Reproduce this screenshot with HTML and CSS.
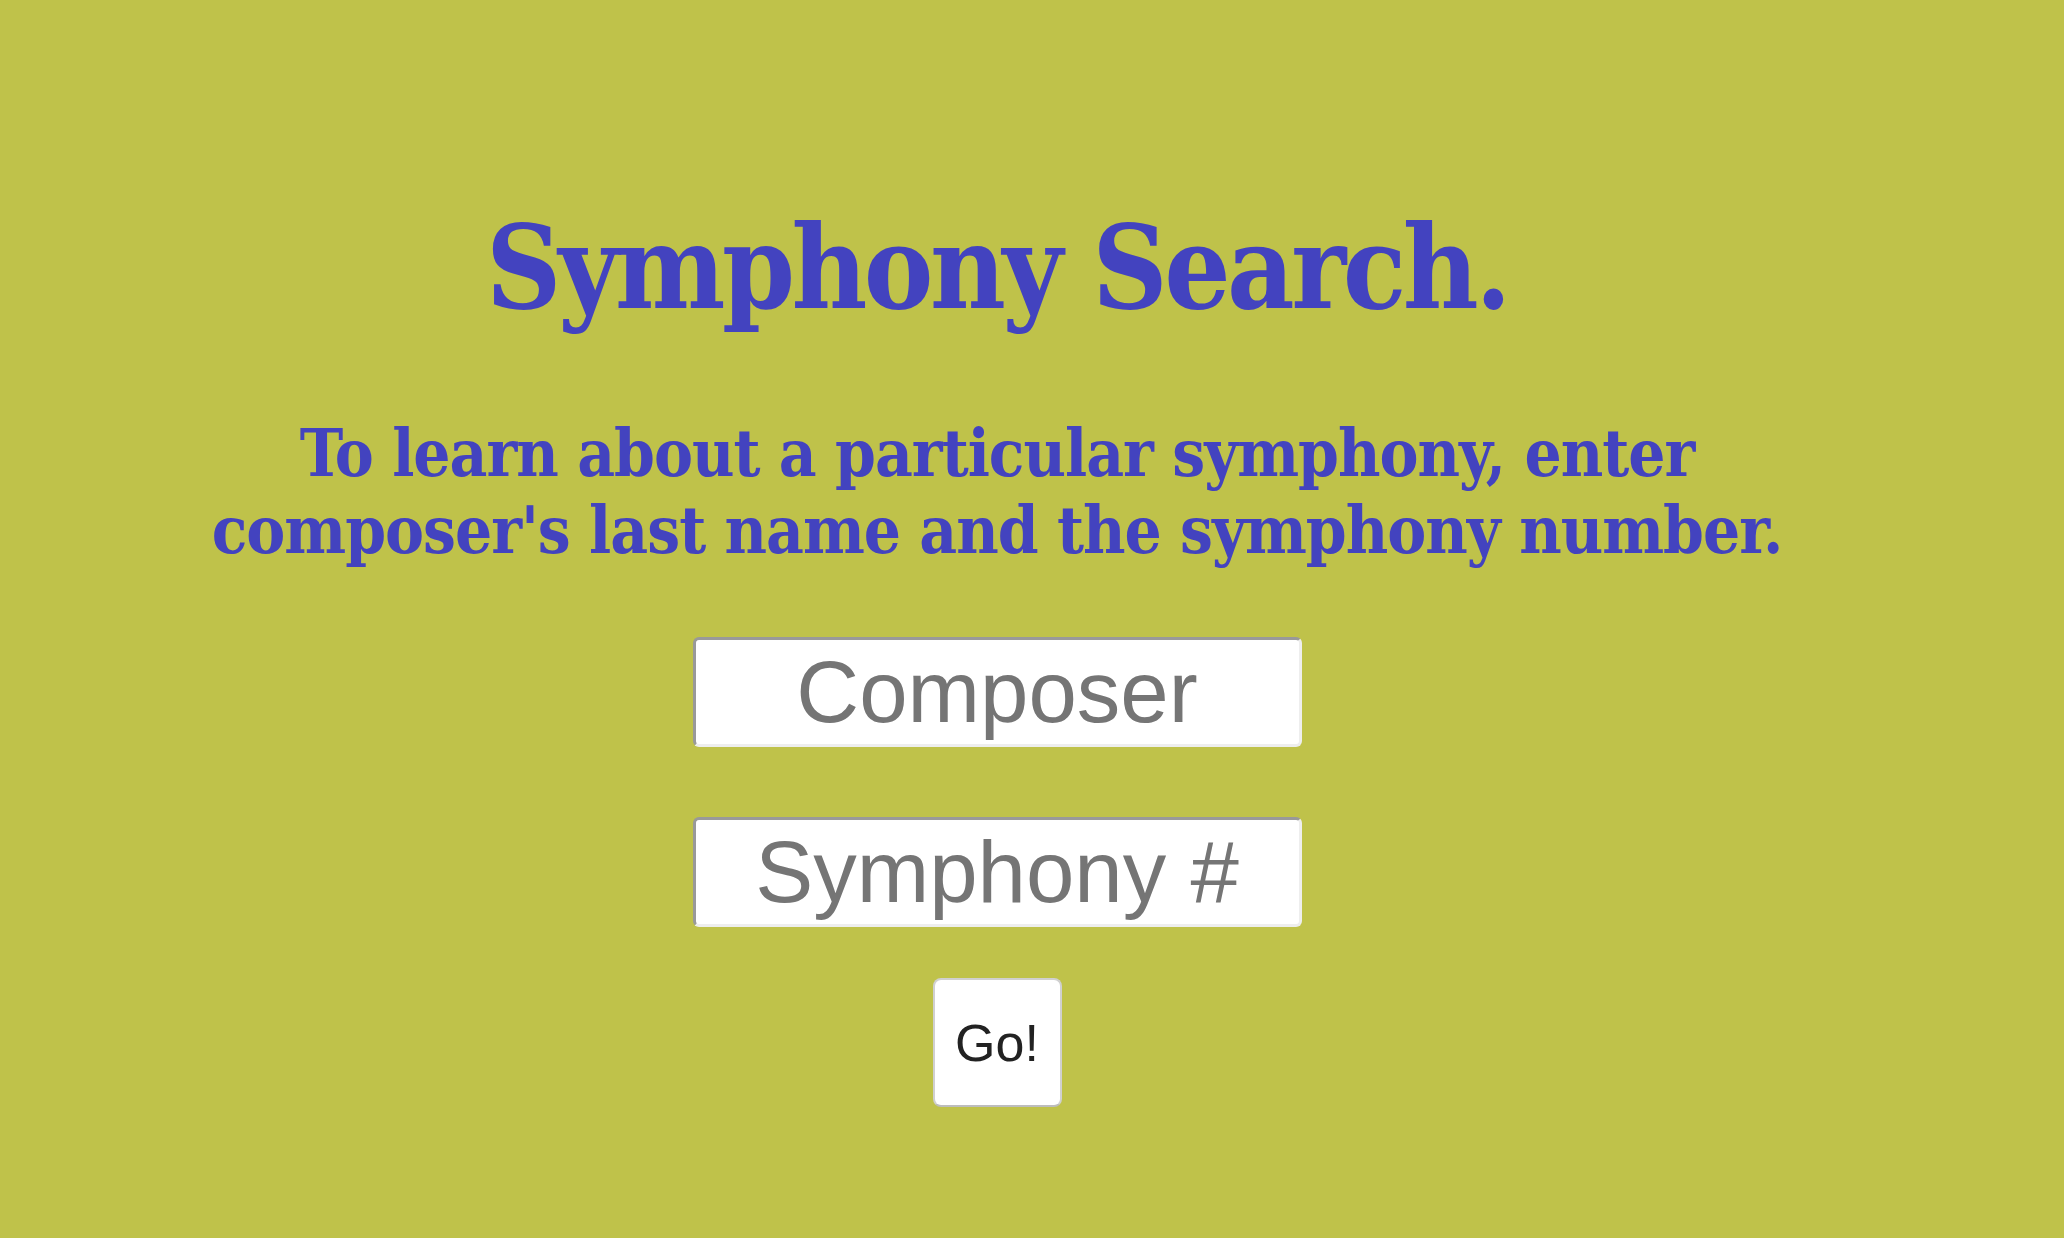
FILE: index.html
```html
<!DOCTYPE html>
<html lang="en">
<head>
<meta charset="utf-8">
<title>Symphony Search</title>
<link rel="stylesheet" href="styles.css">
</head>
<body>
<main class="page">
  <h1 class="title">Symphony Search.</h1>
  <p class="lead">To learn about a particular symphony, enter<br>composer's last name and the symphony number.</p>
  <form class="search">
    <input class="field field-composer" type="text" placeholder="Composer">
    <input class="field field-number" type="text" placeholder="Symphony #">
    <button class="go" type="button">Go!</button>
  </form>
</main>
</body>
</html>
```
FILE: styles.css
```css
html, body {
  margin: 0;
  padding: 0;
  background: #bfc24a;
}
body {
  min-height: 100vh;
}
.page {
  display: flex;
  flex-direction: column;
  align-items: center;
  padding: 209px 70px 0 0;
  color: #4343bf;
  font-family: "DejaVu Serif Condensed", "DejaVu Serif", serif;
}
.title {
  margin: 0;
  font-size: 116px;
  line-height: 116px;
  letter-spacing: -3.5px;
  font-weight: bold;
  text-align: center;
}
.lead {
  margin: 90px 0 0;
  font-size: 65px;
  line-height: 77px;
  letter-spacing: -1px;
  font-weight: bold;
  text-align: center;
}
.search {
  display: flex;
  flex-direction: column;
  align-items: center;
  margin-top: 68px;
}
.field {
  box-sizing: border-box;
  width: 609px;
  height: 110px;
  margin: 0 0 70px;
  padding: 0 10px;
  background: #fff;
  border: 3px solid;
  border-color: #999 #eee #eee #999;
  border-radius: 6px;
  font-family: "Liberation Sans", Arial, sans-serif;
  font-size: 87px;
  color: #222;
  text-align: center;
  outline: none;
}
.field-number {
  margin-bottom: 51px;
}
.field::placeholder {
  color: #757575;
  opacity: 1;
}
.go {
  box-sizing: border-box;
  width: 129px;
  height: 129px;
  padding: 0;
  background: #fff;
  border: 2px solid #d0d0d0;
  border-bottom-color: #bdbdbd;
  border-radius: 8px;
  font-family: "Liberation Sans", Arial, sans-serif;
  font-size: 52px;
  color: #222;
}
```
